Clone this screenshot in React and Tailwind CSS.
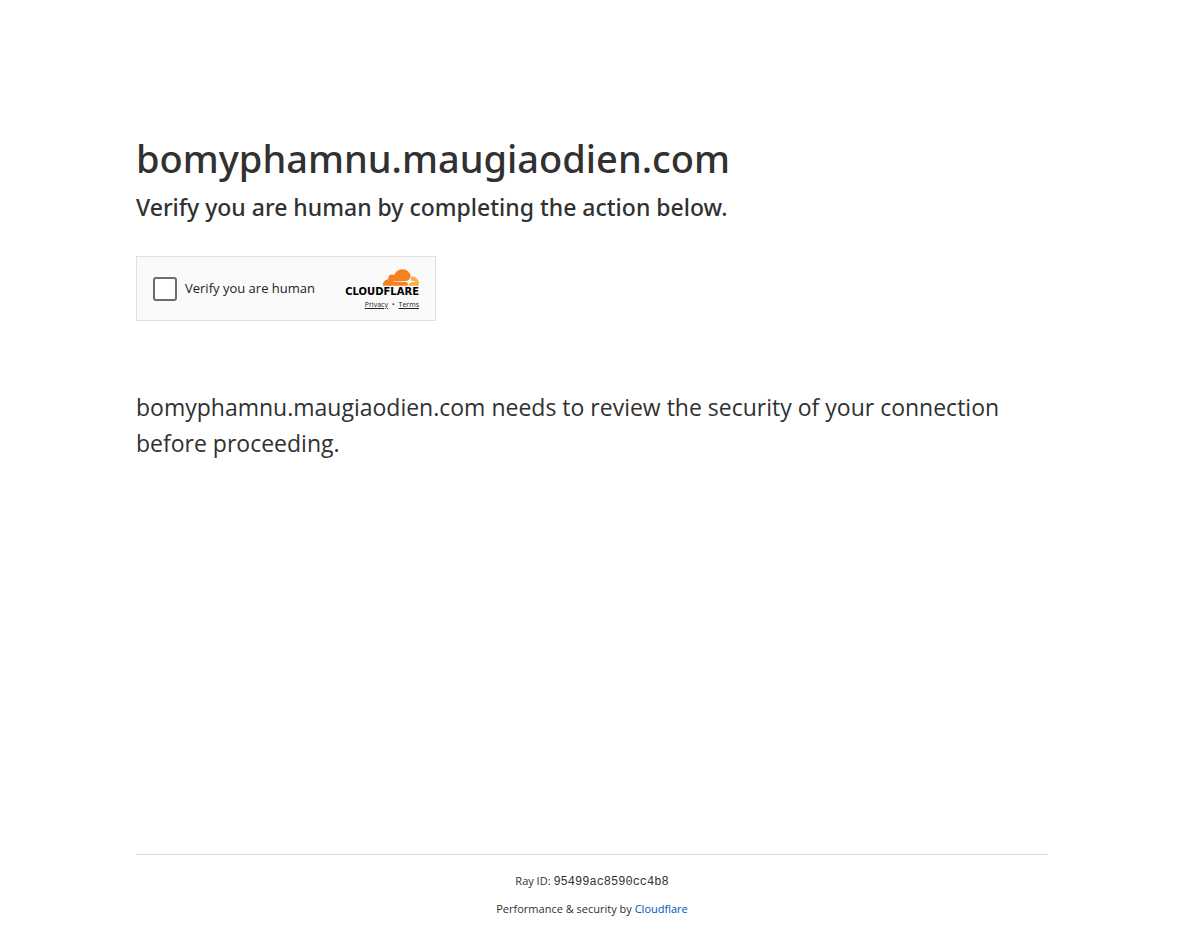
function CloudflareLogo() {
    return (
        <svg viewBox="0 6.5 24 11" className="h-[17px] w-9" aria-hidden="true">
            <path fill="#F6821F" d="M16.5088 16.8447c.1475-.5068.0908-.9707-.1553-1.3154-.2246-.3164-.6045-.499-1.0615-.5205l-8.6592-.1123a.1559.1559 0 0 1-.1333-.0713c-.0283-.042-.0351-.0986-.021-.1553.0278-.084.1123-.1484.2036-.1562l8.7359-.1123c1.0351-.0489 2.1601-.8868 2.5537-1.9136l.499-1.3013c.0215-.0561.0293-.1128.0147-.168-.5625-2.5463-2.835-4.4453-5.5499-4.4453-2.5039 0-4.6284 1.6177-5.3876 3.8614-.4927-.3658-1.1187-.5625-1.794-.499-1.2026.119-2.1665 1.083-2.2861 2.2856-.0283.31-.0069.6128.0635.894C1.5683 13.171 0 14.7754 0 16.752c0 .1748.0142.3515.0352.5273.0141.083.0844.1475.1689.1475h15.9814c.0909 0 .1758-.0645.2032-.1553l.12-.4268z" />
            <path fill="#FBAD41" d="M19.2656 11.2813c-.0771 0-.1611 0-.2383.0112-.0566 0-.1054.0415-.127.0976l-.3378 1.1744c-.1475.5068-.0918.9707.1543 1.3164.2256.3164.6055.498 1.0625.5195l1.8437.1133c.0557 0 .1055.0263.1329.0703.0283.043.0351.1074.0214.1562-.0283.084-.1132.1485-.204.1553l-1.921.1123c-1.041.0488-2.1582.8867-2.5527 1.914l-.1406.3585c-.0283.0713.0215.1416.0986.1416h6.5977c.0771 0 .1474-.0489.169-.126.1122-.4082.1757-.837.1757-1.2803 0-2.6025-2.125-4.727-4.7344-4.727z" />
        </svg>
    );
}

function Challenge() {
    return (
        <div className="flex h-[65px] w-[300px] items-center justify-between border border-[#e0e0e0] bg-[#fafafa] px-4">
            <label className="flex items-center gap-2 text-[13px] text-[#232323]">
                <input type="checkbox" className="size-6 appearance-none rounded-[3px] border-2 border-[#6d6d6d] bg-white checked:bg-[#6d6d6d]" />
                Verify you are human
            </label>
            <div className="flex flex-col items-end">
                <CloudflareLogo />
                <span className="font-['DejaVu_Sans',sans-serif] text-[10px] leading-3 font-bold text-black">CLOUDFLARE</span>
                <div className="flex gap-1 pt-[3px] text-[7px] leading-2 text-[#232323]">
                    <a href="#privacy" className="underline">Privacy</a>
                    <span>•</span>
                    <a href="#terms" className="underline">Terms</a>
                </div>
            </div>
        </div>
    );
}

export default function App() {
    return (
        <div className="flex min-h-screen flex-col bg-white font-['Open_Sans',sans-serif] text-[#313131]">
            <main className="mx-auto mt-32 w-full max-w-240 flex-1 px-6">
                <div className="font-['Noto_Sans',sans-serif] font-medium">
                    <h1 className="text-[38px] leading-[61px]">bomyphamnu.maugiaodien.com</h1>
                    <h2 className="mb-[31px] text-[23px] leading-9">Verify you are human by completing the action below.</h2>
                </div>
                <Challenge />
                <p className="mt-17 text-[23px] leading-9">
                    bomyphamnu.maugiaodien.com needs to review the security of your connection before proceeding.
                </p>
            </main>
            <footer className="mx-auto w-full max-w-240 px-6 text-center text-[11px] leading-5">
                <div className="border-t border-[#d9d9d9] pt-4 pb-3.5">
                    <div className="mb-2">Ray ID: <code className="font-['Liberation_Mono',monospace] text-xs leading-none">95499ac8590cc4b8</code></div>
                    <div>Performance &amp; security by <a href="#cloudflare" className="text-[#0051c3]">Cloudflare</a></div>
                </div>
            </footer>
        </div>
    );
}
